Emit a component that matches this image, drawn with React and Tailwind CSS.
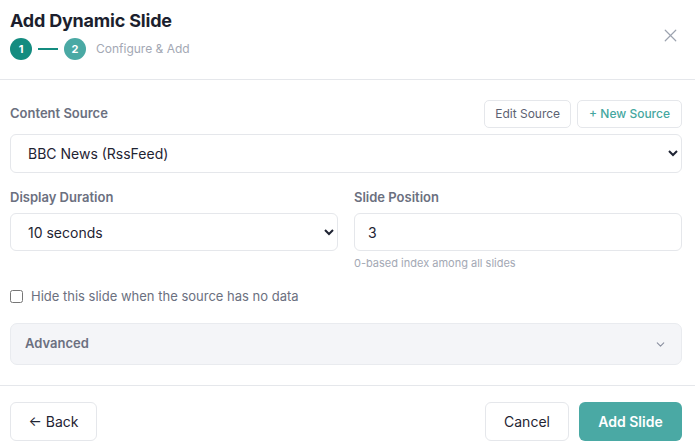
import React, { useState } from 'react';
import { X, ChevronDown } from 'lucide-react';

const DURATIONS = ['5 seconds', '10 seconds', '15 seconds', '30 seconds', '60 seconds'];

const AddDynamicSlide = () => {
    const [source, setSource] = useState('bbc');
    const [duration, setDuration] = useState('10 seconds');
    const [position, setPosition] = useState('3');
    const [hideEmpty, setHideEmpty] = useState(false);
    const [advancedOpen, setAdvancedOpen] = useState(false);

    return (
        <div className="w-[695px] h-[448px] bg-white overflow-hidden text-[#1f2433] font-['Inter','Liberation_Sans',sans-serif]">
            {/* header with stepper */}
            <div className="relative h-[80px] border-b border-[#e5e7eb] pl-[10px] pr-[13px] pt-[9px]">
                <h2 className="text-[18px] leading-[24px] font-bold tracking-[-0.2px] text-[#1c1f2e]">
                    Add Dynamic Slide
                </h2>
                <div className="flex items-center mt-[5px]">
                    <div className="w-[22px] h-[22px] rounded-full bg-[#148c80] text-white text-[11px] font-bold flex items-center justify-center">
                        1
                    </div>
                    <div className="w-[20px] h-[1.5px] bg-[#148c80] mx-[6px]" />
                    <div className="w-[22px] h-[22px] rounded-full bg-[#4aa9a4] text-white text-[11px] font-bold flex items-center justify-center">
                        2
                    </div>
                    <span className="ml-[10px] text-[12px] text-[#a3a8b4]">Configure &amp; Add</span>
                </div>
                <button className="absolute right-[14px] top-[25px] text-[#9ca3af]">
                    <X size={21} strokeWidth={1.4} />
                </button>
            </div>

            <div className="pl-[10px] pr-[13px] pt-[20px]">
                <div className="flex items-center justify-between">
                    <label className="text-[13px] font-semibold text-[#6b7080]">Content Source</label>
                    <div className="flex gap-[6px]">
                        <button className="h-[28px] px-[10px] rounded-[5px] border border-[#e5e7eb] text-[12px] text-[#5d6272]">
                            Edit Source
                        </button>
                        <button className="h-[28px] px-[11px] rounded-[5px] border border-[#e5e7eb] text-[12px] font-medium text-[#45a7a0]">
                            + New Source
                        </button>
                    </div>
                </div>
                <select
                    value={source}
                    onChange={(e) => setSource(e.target.value)}
                    className="mt-[6px] w-full h-[39px] pl-[13px] pr-[10px] rounded-[6px] border border-[#e5e7eb] bg-white text-[14px] text-[#1f2433]"
                >
                    <option value="bbc">BBC News (RssFeed)</option>
                </select>

                <div className="grid grid-cols-2 gap-[16px] mt-[14px]">
                    <div>
                        <label className="block text-[13px] font-semibold text-[#6b7080] leading-[20px]">Display Duration</label>
                        <select
                            value={duration}
                            onChange={(e) => setDuration(e.target.value)}
                            className="mt-[6px] w-full h-[38px] pl-[13px] pr-[6px] rounded-[6px] border border-[#e5e7eb] bg-white text-[14px] text-[#1f2433]"
                        >
                            {DURATIONS.map((d) => (
                                <option key={d} value={d}>{d}</option>
                            ))}
                        </select>
                    </div>
                    <div>
                        <label className="block text-[13px] font-semibold text-[#6b7080] leading-[20px]">Slide Position</label>
                        <input
                            type="text"
                            value={position}
                            onChange={(e) => setPosition(e.target.value)}
                            className="mt-[6px] w-full h-[38px] px-[13px] rounded-[6px] border border-[#e5e7eb] text-[14px] text-[#1f2433] outline-none"
                        />
                        <p className="mt-[4px] text-[11px] text-[#a3a8b4]">0-based index among all slides</p>
                    </div>
                </div>

                <label className="flex items-center gap-[8px] mt-[15px] text-[13px] text-[#6b7080]">
                    <input
                        type="checkbox"
                        checked={hideEmpty}
                        onChange={(e) => setHideEmpty(e.target.checked)}
                        className="w-[13px] h-[13px]"
                    />
                    Hide this slide when the source has no data
                </label>

                <button
                    onClick={() => setAdvancedOpen(!advancedOpen)}
                    className="mt-[17px] w-full h-[42px] flex items-center justify-between px-[14px] rounded-[7px] border border-[#e9ebef] bg-[#f4f5f8] text-[13px] font-semibold text-[#6b7080]"
                >
                    Advanced
                    <ChevronDown size={13} className="text-[#8b90a0]" />
                </button>
            </div>

            {/* footer */}
            <div className="mt-[20px] border-t border-[#e5e7eb] pl-[10px] pr-[13px] pt-[16px] flex items-center justify-between">
                <button className="h-[39px] w-[87px] rounded-[6px] border border-[#e5e7eb] text-[14px] text-[#1f2433]">
                    ← Back
                </button>
                <div className="flex gap-[10px]">
                    <button className="h-[39px] w-[84px] rounded-[6px] border border-[#e5e7eb] text-[14px] text-[#1f2433]">
                        Cancel
                    </button>
                    <button className="h-[39px] w-[103px] rounded-[6px] bg-[#4aa9a4] text-[14px] font-semibold text-white">
                        Add Slide
                    </button>
                </div>
            </div>
        </div>
    );
};

export default function App() {
    return <AddDynamicSlide />;
}
